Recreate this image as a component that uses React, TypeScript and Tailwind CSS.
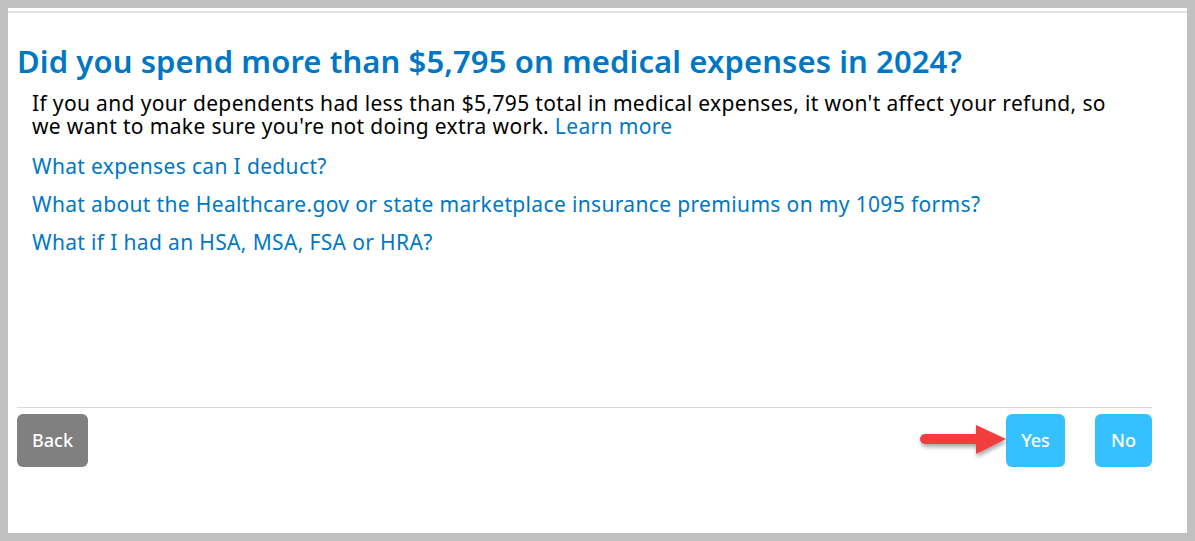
import React from "react";

export default function App() {
  const font = { fontFamily: "'Noto Sans', Lato, sans-serif" };
  return (
    <div className="w-[1195px] h-[541px] bg-[#c0c0c0] p-[8px] pr-[8px]" style={font}>
      <div className="w-[1179px] h-[525px] bg-white flex flex-col">
        <div className="mt-[3px] h-[2px] bg-[#e2e2e2]" />
        <div className="flex-1 flex flex-col pl-[9px] pr-[35px]">
          <h1 className="mt-[28px] text-[31px] leading-[40px] font-semibold text-[#0077c5] whitespace-nowrap tracking-[0.1px]">
            Did you spend more than $5,795 on medical expenses in 2024?
          </h1>
          <div className="pl-[15px] mt-[11px] text-[21px] leading-[23px] text-black whitespace-nowrap tracking-[0.35px]">
            <p>
              If you and your dependents had less than $5,795 total in medical expenses, it won't affect your refund, so
              <br />
              we want to make sure you're not doing extra work. <span className="text-[#0077c5]">Learn more</span>
            </p>
            <div className="mt-[17px] flex flex-col gap-[15px] text-[#0077c5]">
              <div>What expenses can I deduct?</div>
              <div>What about the Healthcare.gov or state marketplace insurance premiums on my 1095 forms?</div>
              <div>What if I had an HSA, MSA, FSA or HRA?</div>
            </div>
          </div>
          <div className="flex-1" />
          <div className="h-[1px] bg-[#d6d9dc]" />
          <div className="mt-[6px] mb-[66px] flex items-center">
            <button className="w-[71px] h-[53px] rounded-[6px] bg-[#808080] text-white text-[18px] font-medium">
              Back
            </button>
            <div className="flex-1" />
            <svg width="90" height="34" viewBox="0 0 90 34" className="mr-[-4px] relative z-10" style={{ filter: "drop-shadow(1px 3px 2px rgba(0,0,0,0.35))" }}>
              <line x1="5" y1="15" x2="62" y2="15" stroke="#f23d3d" strokeWidth="10" strokeLinecap="round" />
              <polygon points="56,1 86,15 56,30" fill="#f23d3d" />
            </svg>
            <button className="w-[59px] h-[53px] rounded-[6px] bg-[#37c0ff] text-white text-[18px] font-medium">
              Yes
            </button>
            <button className="ml-[30px] w-[57px] h-[53px] rounded-[6px] bg-[#37c0ff] text-white text-[18px] font-medium">
              No
            </button>
          </div>
        </div>
      </div>
    </div>
  );
}
